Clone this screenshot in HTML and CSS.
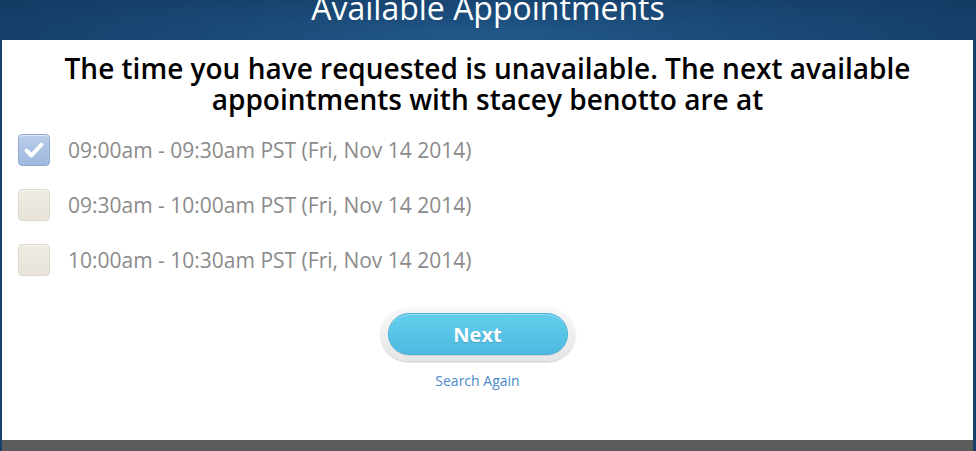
FILE: index.html
```html
<!DOCTYPE html>
<html>
<head>
<meta charset="utf-8">
<link rel="stylesheet" href="styles.css">
</head>
<body>
<div class="page">
  <header class="topbar">
    <h1 class="title">Available Appointments</h1>
  </header>
  <main class="panel">
    <h2 class="message">The time you have requested is unavailable. The next available appointments with stacey benotto are at</h2>
    <ul class="slots">
      <li class="slot">
        <span class="box checked">
          <svg viewBox="0 0 32 32" width="32" height="32"><path d="M8.5 16.5 L13.5 21.5 L23.5 10.5" fill="none" stroke="#fff" stroke-width="4" stroke-linecap="round" stroke-linejoin="round"/></svg>
        </span>
        <span class="slot-text">09:00am - 09:30am PST (Fri, Nov 14 2014)</span>
      </li>
      <li class="slot">
        <span class="box"></span>
        <span class="slot-text">09:30am - 10:00am PST (Fri, Nov 14 2014)</span>
      </li>
      <li class="slot">
        <span class="box"></span>
        <span class="slot-text">10:00am - 10:30am PST (Fri, Nov 14 2014)</span>
      </li>
    </ul>
    <div class="actions">
      <div class="btn-ring">
        <button class="btn-next" type="button">Next</button>
      </div>
      <a class="search-again" href="#">Search Again</a>
    </div>
  </main>
  <footer class="bottombar"></footer>
</div>
</body>
</html>
```
FILE: styles.css
```css
html, body {
  margin: 0;
  padding: 0;
}
body {
  background: #163f69;
  font-family: "Open Sans", "Liberation Sans", sans-serif;
  width: 976px;
  height: 451px;
  overflow: hidden;
}
.page {
  display: flex;
  flex-direction: column;
  height: 451px;
}
.topbar {
  height: 40px;
  overflow: hidden;
  background: radial-gradient(ellipse 60% 140% at 50% 90%, #22598a 0%, #1a4a78 45%, #143b64 100%);
}
.title {
  margin: 0;
  font-size: 32px;
  font-weight: 400;
  line-height: 15px;
  color: #ffffff;
  text-align: center;
}
.panel {
  background: #ffffff;
  margin: 0 3px 0 2px;
  height: 400px;
  padding-top: 13px;
  box-sizing: border-box;
}
.message {
  margin: 0;
  padding: 0 40px;
  font-size: 28px;
  font-weight: 600;
  line-height: 31px;
  color: #000000;
  text-align: center;
}
.slots {
  list-style: none;
  margin: 19px 0 0 0;
  padding: 0 0 0 16px;
  display: flex;
  flex-direction: column;
  gap: 23px;
}
.slot {
  display: flex;
  align-items: center;
  gap: 18px;
  height: 32px;
}
.box {
  width: 32px;
  height: 32px;
  box-sizing: border-box;
  border-radius: 4px;
  border: 1px solid #dcd8ce;
  background: linear-gradient(#efebe3, #e8e4da);
  box-shadow: inset 0 1px 1px rgba(255,255,255,0.6);
  display: block;
  flex: none;
}
.box.checked {
  border-color: #8ea8d1;
  background: linear-gradient(#b9cdea, #9fb8de);
}
.box svg {
  display: block;
  margin: -1px;
}
.slot-text {
  font-size: 21px;
  line-height: 32px;
  color: #8b8b8b;
}
.actions {
  display: flex;
  flex-direction: column;
  align-items: center;
  padding-right: 20px;
  margin-top: 31px;
}
.btn-ring {
  width: 194px;
  height: 54px;
  box-sizing: border-box;
  border-radius: 27px;
  padding: 6px 7px;
  background: linear-gradient(#f7f7f7, #e6e6e6);
  box-shadow: 0 1px 2px rgba(0,0,0,0.25), inset 0 1px 0 #ffffff;
}
.btn-next {
  display: block;
  width: 180px;
  height: 42px;
  border-radius: 21px;
  border: 1px solid #46b0da;
  background: linear-gradient(#63cdeb, #56c2e6 60%, #4fb9e0);
  box-shadow: inset 0 1px 0 rgba(255,255,255,0.35), 0 1px 0 rgba(0,0,0,0.08);
  color: #ffffff;
  font-family: "Open Sans", "Liberation Sans", sans-serif;
  font-size: 20px;
  font-weight: 700;
  padding: 0;
  text-shadow: 0 1px 1px rgba(0,0,0,0.15);
}
.search-again {
  margin-top: 11px;
  font-size: 14px;
  line-height: 18px;
  color: #4a89cc;
  text-decoration: none;
}
.bottombar {
  height: 11px;
  margin: 0 3px 0 2px;
  background: #5a5c5a;
}
```
